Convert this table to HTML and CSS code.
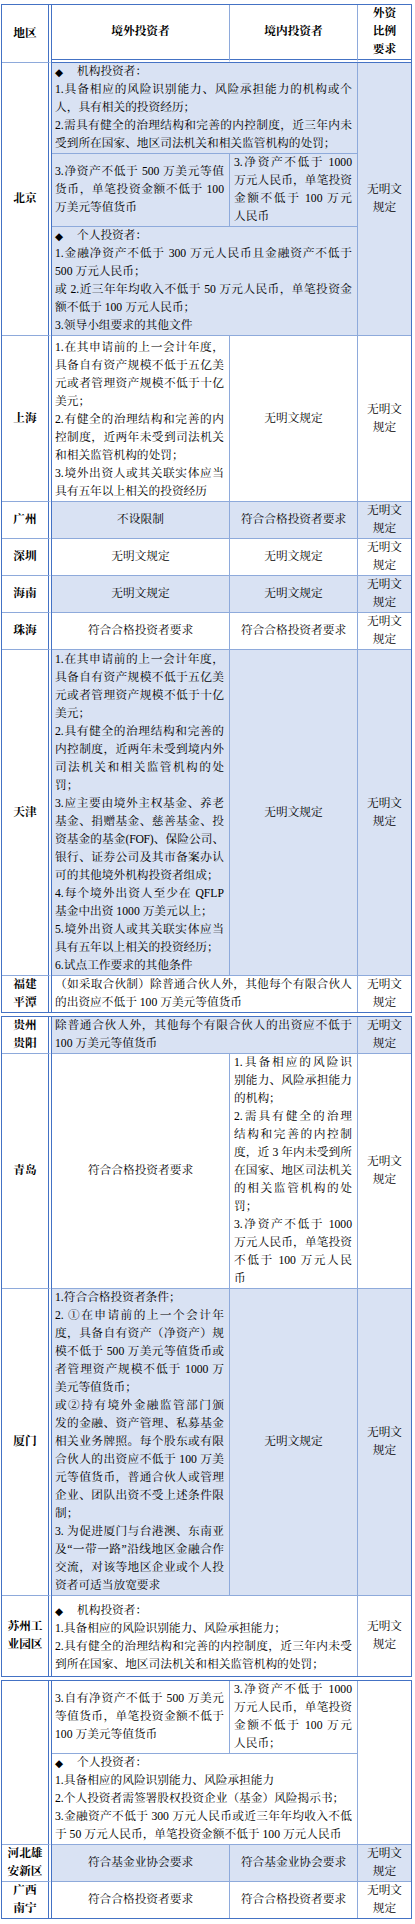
FILE: index.html
```html
<!DOCTYPE html>
<html lang="zh-CN">
<head>
<meta charset="utf-8">
<title>各地 QFLP 试点投资者要求</title>
<link rel="stylesheet" href="styles.css">
</head>
<body>
<div class="doc">

<table class="tb">
<colgroup><col class="c1"><col class="c2"><col class="c3"><col class="c4"></colgroup>
<thead>
<tr class="hd">
<th class="rg">地区</th>
<th class="a">境外投资者</th>
<th class="b">境内投资者</th>
<th class="r">外资<br>比例<br>要求</th>
</tr>
</thead>
<tbody>
<tr class="sh">
<th class="rg" rowspan="3">北京</th>
<td class="tx" colspan="2">
<span><span class="dm">◆</span>机构投资者：</span>
<span class="j">1.具备相应的风险识别能力、风险承担能力的机构或个</span>
<span>人，具有相关的投资经历；</span>
<span class="j">2.需具有健全的治理结构和完善的内控制度，近三年内未</span>
<span>受到所在国家、地区司法机关和相关监管机构的处罚；</span>
</td>
<td class="r" rowspan="3">无明文<br>规定</td>
</tr>
<tr class="sh">
<td class="tx">
<span class="j">3.净资产不低于 500 万美元等值</span>
<span class="j">货币，单笔投资金额不低于 100</span>
<span>万美元等值货币</span>
</td>
<td class="tx b">
<span class="j">3.净资产不低于 1000</span>
<span class="j">万元人民币，单笔投资</span>
<span class="j">金额不低于 100 万元</span>
<span>人民币</span>
</td>
</tr>
<tr class="sh">
<td class="tx" colspan="2">
<span><span class="dm">◆</span>个人投资者：</span>
<span class="j">1.金融净资产不低于 300 万元人民币且金融资产不低于</span>
<span>500 万元人民币；</span>
<span class="j">或 2.近三年年均收入不低于 50 万元人民币，单笔投资金</span>
<span>额不低于 100 万元人民币；</span>
<span>3.领导小组要求的其他文件</span>
</td>
</tr>
<tr>
<th class="rg">上海</th>
<td class="tx pt3">
<span class="j">1.在其申请前的上一会计年度，</span>
<span class="j">具备自有资产规模不低于五亿美</span>
<span class="j">元或者管理资产规模不低于十亿</span>
<span>美元；</span>
<span class="j">2.有健全的治理结构和完善的内</span>
<span class="j">控制度，近两年未受到司法机关</span>
<span>和相关监管机构的处罚；</span>
<span class="j">3.境外出资人或其关联实体应当</span>
<span>具有五年以上相关的投资经历</span>
</td>
<td>无明文规定</td>
<td class="r">无明文<br>规定</td>
</tr>
<tr class="sh">
<th class="rg">广州</th>
<td>不设限制</td>
<td>符合合格投资者要求</td>
<td class="r">无明文<br>规定</td>
</tr>
<tr>
<th class="rg">深圳</th>
<td>无明文规定</td>
<td>无明文规定</td>
<td class="r">无明文<br>规定</td>
</tr>
<tr class="sh">
<th class="rg">海南</th>
<td>无明文规定</td>
<td>无明文规定</td>
<td class="r">无明文<br>规定</td>
</tr>
<tr>
<th class="rg">珠海</th>
<td>符合合格投资者要求</td>
<td>符合合格投资者要求</td>
<td class="r">无明文<br>规定</td>
</tr>
<tr class="sh">
<th class="rg">天津</th>
<td class="tx pt1">
<span class="j">1.在其申请前的上一会计年度，</span>
<span class="j">具备自有资产规模不低于五亿美</span>
<span class="j">元或者管理资产规模不低于十亿</span>
<span>美元；</span>
<span class="j">2.具有健全的治理结构和完善的</span>
<span class="j">内控制度，近两年未受到境内外</span>
<span class="j">司法机关和相关监管机构的处</span>
<span>罚；</span>
<span class="j">3.应主要由境外主权基金、养老</span>
<span class="j">基金、捐赠基金、慈善基金、投</span>
<span class="j t">资基金的基金(FOF)、保险公司、</span>
<span class="j">银行、证券公司及其市备案办认</span>
<span>可的其他境外机构投资者组成；</span>
<span class="j">4.每个境外出资人至少在 QFLP</span>
<span>基金中出资 1000 万美元以上；</span>
<span class="j">5.境外出资人或其关联实体应当</span>
<span>具有五年以上相关的投资经历；</span>
<span>6.试点工作要求的其他条件</span>
</td>
<td>无明文规定</td>
<td class="r">无明文<br>规定</td>
</tr>
<tr class="last">
<th class="rg">福建<br>平潭</th>
<td class="tx" colspan="2">
<span class="j">（如采取合伙制）除普通合伙人外，其他每个有限合伙人</span>
<span>的出资应不低于 100 万美元等值货币</span>
</td>
<td class="r">无明文<br>规定</td>
</tr>
</tbody>
</table>

<table class="tb">
<colgroup><col class="c1"><col class="c2"><col class="c3"><col class="c4"></colgroup>
<tbody>
<tr class="sh">
<th class="rg">贵州<br>贵阳</th>
<td class="tx" colspan="2">
<span class="j">除普通合伙人外，其他每个有限合伙人的出资应不低于</span>
<span>100 万美元等值货币</span>
</td>
<td class="r">无明文<br>规定</td>
</tr>
<tr>
<th class="rg">青岛</th>
<td>符合合格投资者要求</td>
<td class="tx b">
<span class="j">1.具备相应的风险识</span>
<span class="j">别能力、风险承担能力</span>
<span>的机构；</span>
<span class="j">2.需具有健全的治理</span>
<span class="j">结构和完善的内控制</span>
<span class="j">度，近 3 年内未受到所</span>
<span class="j">在国家、地区司法机关</span>
<span class="j">的相关监管机构的处</span>
<span>罚；</span>
<span class="j">3.净资产不低于 1000</span>
<span class="j">万元人民币，单笔投资</span>
<span class="j">不低于 100 万元人民</span>
<span>币</span>
</td>
<td class="r">无明文<br>规定</td>
</tr>
<tr class="sh">
<th class="rg">厦门</th>
<td class="tx">
<span>1.符合合格投资者条件；</span>
<span class="j">2. ①在申请前的上一个会计年</span>
<span class="j">度，具备自有资产（净资产）规</span>
<span class="j">模不低于 500 万美元等值货币或</span>
<span class="j">者管理资产规模不低于 1000 万</span>
<span>美元等值货币；</span>
<span class="j">或②持有境外金融监管部门颁</span>
<span class="j">发的金融、资产管理、私募基金</span>
<span class="j">相关业务牌照。每个股东或有限</span>
<span class="j">合伙人的出资应不低于 100 万美</span>
<span class="j">元等值货币，普通合伙人或管理</span>
<span class="j">企业、团队出资不受上述条件限</span>
<span>制；</span>
<span class="j">3. 为促进厦门与台港澳、东南亚</span>
<span class="j">及“一带一路”沿线地区金融合作</span>
<span class="j">交流，对该等地区企业或个人投</span>
<span>资者可适当放宽要求</span>
</td>
<td>无明文规定</td>
<td class="r">无明文<br>规定</td>
</tr>
<tr class="last">
<th class="rg">苏州工<br>业园区</th>
<td class="tx sz" colspan="2">
<span><span class="dm">◆</span>机构投资者：</span>
<span>1.具备相应的风险识别能力、风险承担能力；</span>
<span class="j">2.具有健全的治理结构和完善的内控制度，近三年内未受</span>
<span>到所在国家、地区司法机关和相关监管机构的处罚；</span>
</td>
<td class="r">无明文<br>规定</td>
</tr>
</tbody>
</table>

<table class="tb">
<colgroup><col class="c1"><col class="c2"><col class="c3"><col class="c4"></colgroup>
<tbody>
<tr>
<th class="rg" rowspan="2"></th>
<td class="tx">
<span class="j">3.自有净资产不低于 500 万美元</span>
<span class="j">等值货币，单笔投资金额不低于</span>
<span>100 万美元等值货币</span>
</td>
<td class="tx b">
<span class="j">3.净资产不低于 1000</span>
<span class="j">万元人民币，单笔投资</span>
<span class="j">金额不低于 100 万元</span>
<span>人民币；</span>
</td>
<td class="r" rowspan="2"></td>
</tr>
<tr>
<td class="tx" colspan="2">
<span><span class="dm">◆</span>个人投资者：</span>
<span>1.具备相应的风险识别能力、风险承担能力</span>
<span>2.个人投资者需签署股权投资企业（基金）风险揭示书；</span>
<span class="j">3.金融资产不低于 300 万元人民币或近三年年均收入不低</span>
<span>于 50 万元人民币，单笔投资金额不低于 100 万元人民币</span>
</td>
</tr>
<tr class="sh">
<th class="rg">河北雄<br>安新区</th>
<td>符合基金业协会要求</td>
<td>符合基金业协会要求</td>
<td class="r">无明文<br>规定</td>
</tr>
<tr class="last">
<th class="rg">广西<br>南宁</th>
<td>符合合格投资者要求</td>
<td>符合合格投资者要求</td>
<td class="r">无明文<br>规定</td>
</tr>
</tbody>
</table>

</div>
</body>
</html>
```

FILE: styles.css
```css
* {
  box-sizing: border-box;
}

html,
body {
  margin: 0;
  padding: 0;
  background: #ffffff;
}

body {
  font-family: "Liberation Serif", "Noto Serif CJK SC", "Noto Sans CJK SC", serif;
  font-size: 11.7px;
  line-height: 18px;
  color: #000000;
}

.doc {
  width: 415px;
  padding: 4px 0 0 1px;
}

.tb {
  border-collapse: separate;
  border-spacing: 0;
  table-layout: fixed;
  width: 411px;
  border: 1px solid #4472c4;
}

.tb + .tb {
  margin-top: 3px;
}

.c1 { width: 50px; }
.c2 { width: 178px; }
.c3 { width: 128px; }
.c4 { width: 53px; }

.tb th,
.tb td {
  padding: 0;
  vertical-align: middle;
  text-align: center;
  font-weight: 400;
  border-right: 1px solid #8eaadb;
  border-bottom: 1px solid #8eaadb;
  background: #ffffff;
}

.tb th.rg {
  font-weight: 700;
  border-right: 4px double #4472c4;
  padding: 0 1px;
}

.tb .r {
  border-right: 0;
  padding: 0 2px;
}

.hd th {
  font-weight: 700;
}

.hd th.a,
.hd th.b,
.hd th.r {
  border-bottom: 4px double #4472c4;
}

.tb .sh td {
  background: #d9e2f3;
}

.tb .last > th,
.tb .last > td {
  border-bottom: 0;
}

.tb td.tx {
  text-align: left;
  padding: 0 5px 0 3px;
}

.tb td.tx.b {
  padding: 0 5px 0 4px;
}

.tb td.pt1 {
  padding-top: 1px;
}

.tb td.pt3 {
  padding-top: 3px;
}

.tb td.sz {
  padding-top: 6px;
  padding-bottom: 2px;
}

.tx > span {
  display: block;
  white-space: normal;
}

.tx > span.j {
  text-align: justify;
  text-align-last: justify;
}

.tx > span.t {
  letter-spacing: -0.25px;
}

.dm {
  display: inline-block;
  width: 22px;
  font-family: "DejaVu Sans", sans-serif;
  font-size: 10.5px;
  line-height: 18px;
  vertical-align: top;
}
```
